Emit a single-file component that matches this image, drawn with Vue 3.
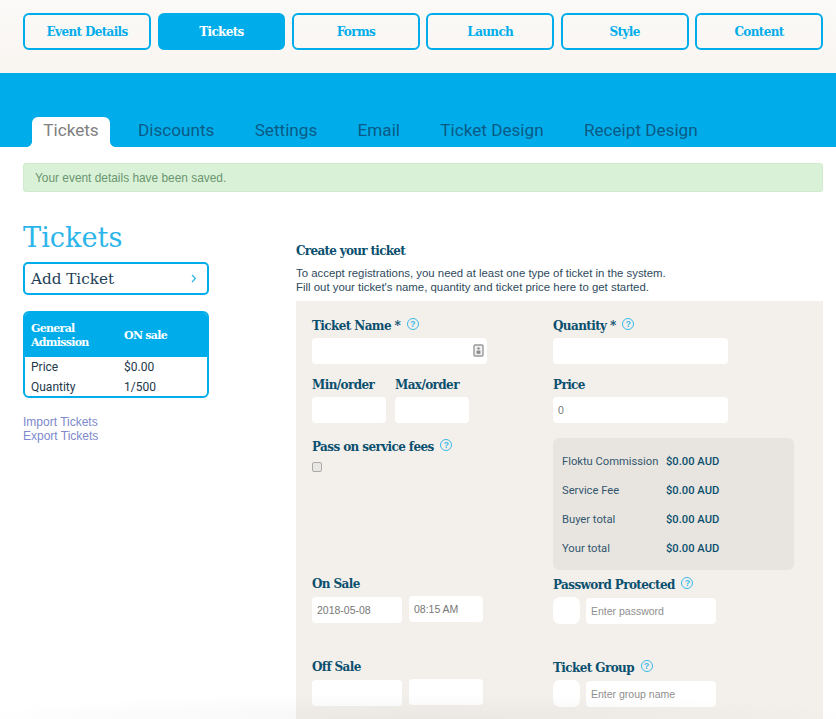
<template>
  <div class="page">
    <!-- Wizard steps -->
    <nav class="steps">
      <a
        v-for="step in steps"
        :key="step"
        class="step"
        :class="{ active: step === 'Tickets' }"
      >{{ step }}</a>
    </nav>

    <div class="band">
      <ul class="tabs">
        <li
          v-for="tab in tabs"
          :key="tab"
          class="tab"
          :class="{ active: tab === 'Tickets' }"
        >{{ tab }}</li>
      </ul>
    </div>

    <div class="alert">Your event details have been saved.</div>

    <div class="content">
      <aside class="side">
        <h1 class="title">Tickets</h1>
        <button class="add-ticket" type="button">
          <span>Add Ticket</span>
          <svg class="chevron" width="6" height="9" viewBox="0 0 6 9">
            <path d="M1 1l3.4 3.5L1 8" fill="none" stroke="#2db3e8" stroke-width="1.2" />
          </svg>
        </button>

        <div class="ticket-card">
          <div class="card-head">
            <span class="card-name">General Admission</span>
            <span class="card-status">ON sale</span>
          </div>
          <div class="card-row"><span>Price</span><span>$0.00</span></div>
          <div class="card-row"><span>Quantity</span><span>1/500</span></div>
        </div>

        <div class="links">
          <a>Import Tickets</a>
          <a>Export Tickets</a>
        </div>
      </aside>

      <section class="main">
        <h2 class="create">Create your ticket</h2>
        <p class="intro">
          To accept registrations, you need at least one type of ticket in the system.<br />
          Fill out your ticket's name, quantity and ticket price here to get started.
        </p>

        <form class="panel">
          <div class="form-row">
            <div class="col">
              <label class="label">Ticket Name * <i class="help">?</i></label>
              <div class="with-icon">
                <input class="input wide" type="text" />
                <svg class="card-icon" width="11" height="13" viewBox="0 0 11 13">
                  <rect x="1" y="1" width="9" height="11" rx="1" fill="#f1f1f1" stroke="#999" stroke-width="1.4" />
                  <circle cx="5.5" cy="4.4" r="1.2" fill="#8a8a8a" />
                  <rect x="3.6" y="6.6" width="3.8" height="3.2" fill="#8a8a8a" />
                </svg>
              </div>
            </div>
            <div class="col">
              <label class="label">Quantity * <i class="help">?</i></label>
              <input class="input wide" type="text" />
            </div>
          </div>

          <div class="form-row">
            <div class="col pair">
              <div>
                <label class="label">Min/order</label>
                <input class="input small" type="text" />
              </div>
              <div>
                <label class="label">Max/order</label>
                <input class="input small" type="text" />
              </div>
            </div>
            <div class="col">
              <label class="label">Price</label>
              <input class="input wide" type="text" value="0" />
            </div>
          </div>

          <div class="form-row">
            <div class="col fees-left">
              <label class="label">Pass on service fees <i class="help">?</i></label>
              <span class="checkbox"></span>
            </div>
            <div class="col">
              <div class="fees">
                <div v-for="fee in fees" :key="fee" class="fee-row">
                  <span class="fee-name">{{ fee }}</span>
                  <span class="fee-value">$0.00 AUD</span>
                </div>
              </div>
            </div>
          </div>

          <div class="form-row dates">
            <div class="col">
              <label class="label">On Sale</label>
              <div class="date-pair">
                <input class="input date" type="text" value="2018-05-08" />
                <input class="input time" type="text" value="08:15 AM" />
              </div>
            </div>
            <div class="col shifted">
              <label class="label">Password Protected <i class="help">?</i></label>
              <div class="addon-pair">
                <span class="addon"></span>
                <input class="input addon-input" type="text" placeholder="Enter password" />
              </div>
            </div>
          </div>

          <div class="form-row dates last">
            <div class="col">
              <label class="label">Off Sale</label>
              <div class="date-pair">
                <input class="input date" type="text" />
                <input class="input time" type="text" />
              </div>
            </div>
            <div class="col shifted">
              <label class="label">Ticket Group <i class="help">?</i></label>
              <div class="addon-pair">
                <span class="addon"></span>
                <input class="input addon-input" type="text" placeholder="Enter group name" />
              </div>
            </div>
          </div>
        </form>
      </section>
    </div>
    <div class="bottom-fade"></div>
  </div>
</template>

<script setup>
const steps = ['Event Details', 'Tickets', 'Forms', 'Launch', 'Style', 'Content']
const tabs = ['Tickets', 'Discounts', 'Settings', 'Email', 'Ticket Design', 'Receipt Design']
const fees = ['Floktu Commission', 'Service Fee', 'Buyer total', 'Your total']
</script>

<style>
html,
body {
  margin: 0;
  background: #fff;
}
</style>

<style scoped>
.page {
  position: relative;
  width: 836px;
  height: 719px;
  overflow: hidden;
  font-family: "Liberation Sans", Arial, sans-serif;
  background: #fff;
}

.steps {
  box-sizing: border-box;
  height: 73px;
  padding: 13px 13px 0 23.2px;
  display: grid;
  grid-template-columns: repeat(6, 127.8px);
  column-gap: 6.6px;
  align-items: start;
  background: linear-gradient(#fbfaf8, #f9f5f1);
}

.step {
  box-sizing: border-box;
  height: 37px;
  line-height: 35px;
  text-align: center;
  border: 2px solid #00adea;
  border-radius: 6px;
  color: #00adea;
  font-family: "DejaVu Serif", serif;
  font-weight: 700;
  font-size: 12px;
  letter-spacing: -0.65px;
}

.step.active {
  background: #00adea;
  color: #fff;
}

.band {
  box-sizing: border-box;
  height: 74px;
  background: #00adea;
  display: flex;
  align-items: flex-end;
}

.tabs {
  list-style: none;
  margin: 0;
  padding: 0 0 0 32px;
  display: flex;
  gap: 28px;
}

.tab {
  height: 30px;
  line-height: 27px;
  font-family: Roboto, sans-serif;
  font-size: 17.15px;
  color: #0b5a86;
  margin-right: 12.3px;
}

.tab.active {
  position: relative;
  width: 78px;
  margin-right: 0;
  text-align: center;
  background: #fff;
  color: #808080;
  border-radius: 6px 6px 0 0;
}

.tab.active::before,
.tab.active::after {
  content: "";
  position: absolute;
  bottom: 0;
  width: 5px;
  height: 5px;
  background: radial-gradient(circle at 0 0, transparent 4.5px, #fff 5px);
}

.tab.active::before {
  left: -5px;
}

.tab.active::after {
  right: -5px;
  transform: scaleX(-1);
}

.alert {
  box-sizing: border-box;
  height: 29px;
  margin: 16px 13px 0 23px;
  padding: 0 11px;
  line-height: 28px;
  font-size: 11.9px;
  color: #6a9670;
  background: #d9f1d6;
  border: 1px solid #d0eacd;
  border-radius: 3px;
}

.content {
  display: flex;
  padding-left: 23px;
}

.side {
  width: 186px;
  margin-right: 87px;
  padding-top: 28px;
}

.title {
  margin: 0 0 6px;
  font-family: "DejaVu Serif", serif;
  font-weight: 300;
  font-size: 27.2px;
  line-height: 36px;
  color: #2bb5ea;
}

.add-ticket {
  box-sizing: border-box;
  width: 186px;
  height: 33px;
  padding: 0 10px 0 6px;
  display: flex;
  align-items: center;
  justify-content: space-between;
  background: #fff;
  border: 2px solid #00adea;
  border-radius: 5px;
  font-family: "DejaVu Serif", serif;
  font-size: 15.2px;
  color: #1e3f58;
}

.ticket-card {
  box-sizing: border-box;
  margin-top: 16px;
  height: 87px;
  border: 2px solid #00adea;
  border-radius: 6px;
  overflow: hidden;
  font-size: 12px;
  color: #23384a;
}

.card-head {
  box-sizing: border-box;
  height: 44px;
  padding: 2px 6px 0;
  display: flex;
  align-items: center;
  background: #00adea;
  color: #fff;
  font-family: "DejaVu Serif", serif;
  font-weight: 700;
  font-size: 11px;
  line-height: 14px;
  letter-spacing: -0.7px;
}

.card-name {
  width: 93px;
}

.card-row {
  display: flex;
  height: 20px;
  padding: 0 6px;
  align-items: center;
  font-family: Roboto, sans-serif;
}

.card-row span:first-child {
  width: 93px;
}

.links {
  margin-top: 17px;
  display: flex;
  flex-direction: column;
  font-size: 12px;
  line-height: 14px;
  color: #7d89cc;
}

.main {
  width: 527px;
  padding-top: 51px;
}

.create {
  margin: 0;
  font-family: "DejaVu Serif", serif;
  font-weight: 700;
  font-size: 12px;
  line-height: 16px;
  letter-spacing: -0.7px;
  color: #0a4f6e;
}

.intro {
  margin: 7px 0 0;
  font-size: 11.4px;
  line-height: 14px;
  color: #2e4a5c;
  height: 28px;
}

.panel {
  box-sizing: border-box;
  height: 418px;
  margin-top: 7px;
  padding: 15px 0 0 16px;
  background: #f3f0ec;
}

.form-row {
  display: flex;
  margin-bottom: 11px;
}

.col {
  width: 241px;
}

.pair {
  display: flex;
  gap: 9px;
}

.label {
  display: block;
  height: 18px;
  line-height: 20px;
  margin-bottom: 4px;
  font-family: "DejaVu Serif", serif;
  font-weight: 700;
  font-size: 12px;
  letter-spacing: -0.6px;
  color: #0a4f6e;
  white-space: nowrap;
}

.help {
  display: inline-block;
  box-sizing: border-box;
  width: 12px;
  height: 12px;
  margin-left: 3px;
  border: 1px solid #3bb8ea;
  border-radius: 50%;
  vertical-align: 3px;
  text-align: center;
  font: normal 700 9px/10px "Liberation Sans", sans-serif;
  color: #3bb8ea;
  letter-spacing: 0;
}

.input {
  display: block;
  box-sizing: border-box;
  height: 26px;
  padding: 0 5px;
  border: 0;
  border-radius: 4px;
  background: #fff;
  outline: none;
  font-family: "Liberation Sans", sans-serif;
  font-size: 10.5px;
  color: #777;
}

.input::placeholder {
  color: #8f8f8f;
  opacity: 1;
}

.wide {
  width: 175px;
}

.small {
  width: 74px;
}

.with-icon {
  position: relative;
  width: 175px;
}

.card-icon {
  position: absolute;
  top: 6px;
  right: 3px;
}

.fees-left .label {
  margin-top: 3px;
}

.checkbox {
  display: block;
  box-sizing: border-box;
  width: 10px;
  height: 10px;
  margin-top: 7px;
  border: 1px solid #aaa;
  border-radius: 2px;
  background: #e9e7e4;
}

.fees {
  box-sizing: border-box;
  width: 241px;
  height: 132px;
  margin-top: 4px;
  padding: 9px 9px;
  background: #e8e5e0;
  border-radius: 6px;
}

.fee-row {
  display: flex;
  height: 29px;
  align-items: center;
  font-family: Roboto, sans-serif;
  font-size: 11.2px;
  color: #33566e;
  white-space: nowrap;
}

.fee-name {
  width: 104px;
}

.fee-value {
  color: #0a4f6e;
  font-weight: 500;
}

.dates {
  margin-bottom: 0;
  height: 83px;
  margin-top: -7px;
}

.dates.last {
  margin-top: 0;
}

.date-pair {
  display: flex;
  gap: 7px;
  align-items: flex-start;
}

.date {
  width: 90px;
  margin-top: 1px;
  padding-left: 5px;
}

.time {
  width: 74px;
}

.shifted {
  padding-top: 1px;
}

.addon-pair {
  display: flex;
  gap: 6px;
  align-items: flex-end;
}

.addon {
  width: 27px;
  height: 27px;
  background: #fff;
  border-radius: 7px;
}

.addon-input {
  width: 130px;
}

.bottom-fade {
  position: absolute;
  left: 0;
  right: 0;
  bottom: 0;
  height: 26px;
  background: radial-gradient(ellipse 55% 100% at 50% 100%, rgba(90, 90, 90, 0.06), rgba(90, 90, 90, 0));
  pointer-events: none;
}
</style>
